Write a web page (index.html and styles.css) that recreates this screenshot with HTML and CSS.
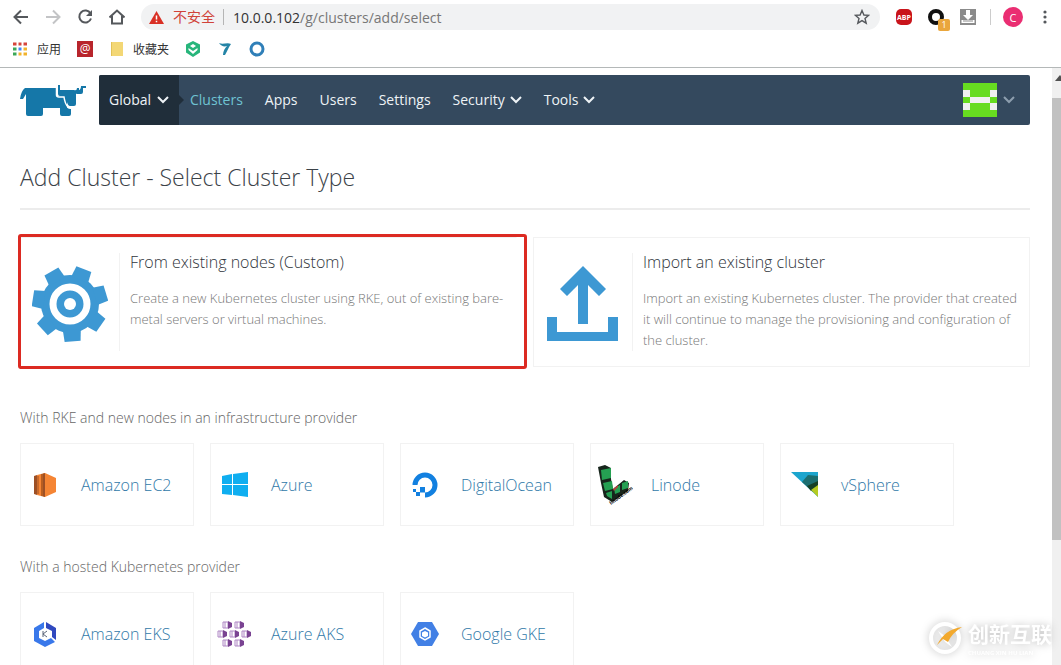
FILE: index.html
```
<!DOCTYPE html>
<html lang="en">

<head>
    <meta charset="UTF-8">
    <meta name="viewport" content="width=device-width, initial-scale=1.0">
    <title>Rancher</title>
    <link rel="stylesheet" href="styles.css">
</head>

<body>
    <div class="browser">
        <div class="toolbar">
            <button class="tool" type="button" aria-label="Back"><svg width="16" height="16" viewBox="0 0 16 16"><path d="M15 8H2M8 1.500L1.500 8L8 14.500" fill="none" stroke="#55585c" stroke-width="2"/></svg></button>
            <button class="tool" type="button" aria-label="Forward"><svg width="16" height="16" viewBox="0 0 16 16"><path d="M1 8H14M8 1.500L14.500 8L8 14.500" fill="none" stroke="#c3c4c6" stroke-width="2"/></svg></button>
            <button class="tool" type="button" aria-label="Reload"><svg width="16" height="16" viewBox="0 0 16 16"><path d="M13.500 4.500A6 6 0 1 0 14 9.500" fill="none" stroke="#55585c" stroke-width="2"/><path d="M15 1V7H9z" fill="#55585c"/></svg></button>
            <button class="tool" type="button" aria-label="Home"><svg width="16" height="16" viewBox="0 0 16 16"><path d="M0.500 8.500L8 1.500L15.500 8.500M3 7V14.500H13V7" fill="none" stroke="#55585c" stroke-width="2"/></svg></button>
            <div class="address">
                <svg width="15" height="13" viewBox="0 0 15 13"><path d="M7.500 0L15 13H0z" fill="#d93025"/><path d="M7.500 4.500V8.500M7.500 9.800V11.200" stroke="#fff" stroke-width="1.500"/></svg>
                <span class="warning">不安全</span>
                <label class="host" for="url">10.0.0.102</label>
                <input class="path" id="url" type="text" value="/g/clusters/add/select">
                <button class="tool" type="button" aria-label="Bookmark"><svg width="16" height="16" viewBox="0 0 16 16"><path d="M8 1.500L9.900 6L14.700 6.300L11 9.400L12.200 14.200L8 11.600L3.800 14.200L5 9.400L1.300 6.300L6.100 6z" fill="none" stroke="#55585c" stroke-width="1.400"/></svg></button>
            </div>
            <div class="extensions">
                <button class="tool abp" type="button">ABP</button>
                <button class="tool counter" type="button" aria-label="Requests"><svg width="16" height="16" viewBox="0 0 16 16"><circle cx="8" cy="8" r="6" fill="none" stroke="#111" stroke-width="4"/></svg><span class="count">1</span></button>
                <button class="tool" type="button" aria-label="Downloads"><svg width="16" height="16" viewBox="0 0 16 16"><rect width="16" height="16" fill="#8b8b8b"/><path d="M6 1H10V6H13L8 11L3 6H6zM1.500 11V14H14.500V11" fill="#fff"/><path d="M3 12H13" stroke="#8b8b8b"/></svg></button>
                <span class="split"></span>
                <button class="tool profile" type="button">C</button>
                <button class="tool" type="button" aria-label="Menu"><svg width="4" height="16" viewBox="0 0 4 16" fill="#55585c"><circle cx="2" cy="3" r="1.600"/><circle cx="2" cy="8" r="1.600"/><circle cx="2" cy="13" r="1.600"/></svg></button>
            </div>
        </div>
        <div class="bookmarks">
            <a href="#"><svg width="14" height="14" viewBox="0 0 14 14"><path d="M0 2H4M5 2H9M10 2H14" stroke="#d6453a" stroke-width="3"/><path d="M0 7H4" stroke="#3aa757" stroke-width="3"/><path d="M5 7H9" stroke="#4286f5" stroke-width="3"/><path d="M10 7H14" stroke="#f2b32a" stroke-width="3"/><path d="M0 12H4" stroke="#3aa757" stroke-width="3"/><path d="M5 12H14" stroke="#f2b32a" stroke-width="3"/><path d="M4.500 0V14M9.500 0V14" stroke="#fff" stroke-width="2"/></svg>应用</a>
            <a class="mail" href="#">@</a>
            <a href="#"><svg width="12" height="14" viewBox="0 0 12 14"><path d="M0 0H12V14H0z" fill="#f3d775"/><path d="M0 0H1V14H0z" fill="#e2c158"/></svg>收藏夹</a>
            <a href="#" aria-label="Shield"><svg width="16" height="16" viewBox="0 0 16 16"><path d="M8 0L15 3.500V11.500L8 16L1 11.500V3.500z" fill="#27b57b"/><path d="M8 3L11 5L8 7L5 5zM3.500 7L8 10L12.500 7V9L8 13L3.500 9z" fill="#fff"/></svg></a>
            <a href="#" aria-label="Seven"><svg width="16" height="14" viewBox="-2 0 16 14"><path d="M0 1C4 3 8 0 12 2C9 6 8 10 6 13H4C4 9 6 6 8 4C5 5 2 4 0 1z" fill="#2484a6"/></svg></a>
            <a href="#" aria-label="Ring"><svg width="16" height="16" viewBox="0 0 16 16"><circle cx="8" cy="8" r="6" fill="none" stroke="#2f7fb8" stroke-width="3"/></svg></a>
        </div>
    </div>

    <div class="viewport">
        <div class="page">
            <header>
                <a class="logo" href="#" aria-label="Rancher">
                    <svg width="67" height="31" viewBox="0 0 67 31" fill="#1577a8">
                        <path d="M5 3H37V11H47V23H23V29Q23 31 21 31H8Q6 31 6 29V9L3 14H0Q1 6 5 3z"/>
                        <path d="M38 0H40V5H54Q57 6 57 3H59V8L56 9V19Q56 21 54 21H50Q48 21 47 17L44 11H40Q38 11 38 9z"/>
                        <path d="M57 5Q61 6 61 1H66V3H63V7Q63 9 61 9H57z"/>
                        <path d="M40 20H46Q46 23 50 24H51V29Q51 31 49 31H42Q40 31 40 29z"/>
                        <path d="M36.500 2V10Q36.500 12 39 12H44Q45 19 48 22H52" fill="none" stroke="#fff" stroke-width="1.500"/>
                    </svg>
                </a>
                <nav>
                    <button class="scope" type="button">Global <svg class="chevron" width="12" height="8" viewBox="0 0 12 8"><path d="M1 1L6 6L11 1"/></svg></button>
                    <a class="active" href="#">Clusters</a>
                    <a href="#">Apps</a>
                    <a href="#">Users</a>
                    <a href="#">Settings</a>
                    <button type="button">Security <svg class="chevron" width="12" height="8" viewBox="0 0 12 8"><path d="M1 1L6 6L11 1"/></svg></button>
                    <button type="button">Tools <svg class="chevron" width="12" height="8" viewBox="0 0 12 8"><path d="M1 1L6 6L11 1"/></svg></button>
                    <button class="user" type="button" aria-label="Account">
                        <svg width="34" height="34" viewBox="0 0 5 5" shape-rendering="crispEdges"><path d="M0 0H5V5H0z" fill="#67dc20"/><path d="M0 1H1V2H0zM4 1H5V2H4zM1 2H4V3H1zM0 3H1V4H0zM4 3H5V4H4z" fill="#f0f0f0"/></svg>
                        <svg class="chevron thin" width="12" height="8" viewBox="0 0 12 8"><path d="M1 1L6 6L11 1"/></svg>
                    </button>
                </nav>
            </header>

            <main>
                <h1>Add Cluster - Select Cluster Type</h1>

                <div class="choices">
                    <a class="choice selected" href="#">
                        <span class="choice-icon">
                            <svg width="76" height="76" viewBox="-38 -38 76 76">
                                <g fill="#3d98d3">
                                    <circle r="29"/>
                                    <path id="tooth" d="M-9 -26L-8 -37.500H8L9 -26z" transform="rotate(176)"/>
                                    <use href="#tooth" transform="rotate(51.430)"/>
                                    <use href="#tooth" transform="rotate(102.860)"/>
                                    <use href="#tooth" transform="rotate(154.290)"/>
                                    <use href="#tooth" transform="rotate(205.710)"/>
                                    <use href="#tooth" transform="rotate(257.140)"/>
                                    <use href="#tooth" transform="rotate(308.570)"/>
                                </g>
                                <circle r="17" fill="none" stroke="#fff" stroke-width="7"/>
                                <circle r="6" fill="#fff"/>
                            </svg>
                        </span>
                        <span class="choice-text">
                            <strong>From existing nodes (Custom)</strong>
                            <span>Create a new Kubernetes cluster using RKE, out of existing bare-metal servers or virtual machines.</span>
                        </span>
                    </a>
                    <a class="choice" href="#">
                        <span class="choice-icon">
                            <svg width="72" height="76" viewBox="0 0 72 76" fill="#3d98d3"><path d="M36 0L59 23L52 30L41 19V58H31V19L20 30L13 23zM0 51H10V66H61V51H71V75H0z"/></svg>
                        </span>
                        <span class="choice-text">
                            <strong>Import an existing cluster</strong>
                            <span>Import an existing Kubernetes cluster. The provider that created it will continue to manage the provisioning and configuration of the cluster.</span>
                        </span>
                    </a>
                </div>

                <h2>With RKE and new nodes in an infrastructure provider</h2>
                <div class="providers">
                    <a class="provider" href="#">
                        <svg width="36" height="40" viewBox="0 0 36 40"><path d="M7 11L10 10V30L7 29z" fill="#9d5025"/><path d="M10 10L14 9V31L10 30z" fill="#f58534"/><path d="M14 9L18 8V32L14 31z" fill="#b85e20"/><path d="M16 8.500L18 8L29 13V27L18 32L16 31z" fill="#f58534"/><path d="M18 8V32L16 31V9z" fill="#9d5025"/><path d="M11 11V29" stroke="#9d5025"/></svg>
                        Amazon EC2
                    </a>
                    <a class="provider" href="#">
                        <svg width="36" height="40" viewBox="0 0 36 40" fill="#0faef0"><path d="M5 11L15 9V19H5zM16 9L31 7V19H16zM5 20H15V30L5 29zM16 20H31V32L16 30z"/></svg>
                        Azure
                    </a>
                    <a class="provider" href="#">
                        <svg width="36" height="40" viewBox="0 0 36 40"><path d="M8 20A10 10 0 1 1 18 30" fill="none" stroke="#1280e0" stroke-width="5"/><path d="M13 22H18V27.500H13zM9 27H13V31H9zM6 24H9V27H6z" fill="#1280e0"/></svg>
                        DigitalOcean
                    </a>
                    <a class="provider" href="#">
                        <svg width="36" height="40" viewBox="0 0 36 40">
                            <path d="M1 2L8 0L14 3V14L16 24L27 15L32 18L31 26L15 37L7 32L4 18z" fill="#17251c"/>
                            <path d="M4 5L14 3V13L5 15zM6 18L15 16L16 24L8 26zM9 28L15 26V34L10 31zM17 23L23 20V27L18 29zM25 18L31 16V23L25 25z" fill="#25a052"/>
                            <path d="M16 24L21 20V22L17 26z" fill="#b1403c"/>
                            <text class="linode-url" transform="translate(14 40) rotate(-36)">linode.com</text>
                        </svg>
                        Linode
                    </a>
                    <a class="provider" href="#">
                        <svg width="36" height="40" viewBox="0 0 36 40"><path d="M4 7H31V32z" fill="#1ca5ce"/><path d="M15 17L21 10L31 11V26L26 27z" fill="#1c6e70"/><path d="M20 21L31 16V24L24 26z" fill="#154026"/><path d="M24 25L31 20V32z" fill="#b5cb22"/></svg>
                        vSphere
                    </a>
                </div>

                <h2>With a hosted Kubernetes provider</h2>
                <div class="providers">
                    <a class="provider" href="#">
                        <svg width="36" height="40" viewBox="0 0 36 40"><path d="M17 8V14L12 17V24L18 27L24 24L28 28L18 33L7 27V14z" fill="#3978ea"/><path d="M19 8L29 14V26L25 23V17L19 14z" fill="#3049bf"/><path d="M16 17V23M20 17L16 20L20 23" fill="none" stroke="#5b6578"/></svg>
                        Amazon EKS
                    </a>
                    <a class="provider" href="#">
                        <svg width="36" height="40" viewBox="0 0 36 40">
                            <g id="pod"><path d="M6 8H11V14H6z" fill="#fff" stroke="#ae86c4"/><path d="M8 8V14" stroke="#ae86c4"/><path d="M11 7L15 9V13L11 15z" fill="#7a4392"/></g>
                            <use href="#pod" x="12"/>
                            <use href="#pod" x="-5" y="9"/>
                            <use href="#pod" x="7" y="9"/>
                            <use href="#pod" x="19" y="9"/>
                            <use href="#pod" y="18"/>
                            <use href="#pod" x="12" y="18"/>
                        </svg>
                        Azure AKS
                    </a>
                    <a class="provider" href="#">
                        <svg width="36" height="40" viewBox="0 0 36 40"><path d="M11 8H25L32 20L25 32H11L4 20z" fill="#4280e5"/><path d="M18 14L23 17V23L18 26L13 23V17z" fill="none" stroke="#fff" stroke-width="1.500"/><path d="M18 17L21 18.500V22L18 23.500L15 22V18.500z" fill="#fff"/></svg>
                        Google GKE
                    </a>
                </div>
            </main>
        </div>
        <div class="scrollbar">
            <svg class="scroll-up" width="10" height="6" viewBox="0 0 10 6"><path d="M5 0L10 6H0z" fill="#505050"/></svg>
            <div class="thumb"></div>
        </div>
    </div>

    <div class="watermark">
        <svg width="36" height="34" viewBox="0 0 36 34"><circle cx="17" cy="17" r="14" fill="none" stroke="#fff" stroke-width="4"/><path d="M10 10L17 15L24 26L17 21z" fill="#fff"/><path d="M9 24Q17 8 34 6Q24 12 20 21L15 18z" fill="#f2a92e"/></svg>
        <div>
            <div class="watermark-name">创新互联</div>
            <div class="watermark-sub">CHUANG XIN HU LIAN</div>
        </div>
    </div>
</body>

</html>
```

FILE: styles.css
```
* {
    box-sizing: border-box;
}

body {
    display: flex;
    flex-direction: column;
    height: 100vh;
    margin: 0;
    overflow: hidden;
    font-family: "Open Sans", "Noto Sans CJK SC", sans-serif;
    font-size: 14px;
    font-weight: 300;
    background-color: white;
}

a {
    color: inherit;
    text-decoration: none;
}

button {
    padding: 0;
    border: none;
    background: none;
    font: inherit;
    color: inherit;
}

svg {
    display: block;
    flex-shrink: 0;
}

/* browser bars */
.browser {
    border-bottom: 1px solid #b4b8b8;
    font-weight: 400;
}

.toolbar {
    display: flex;
    align-items: center;
    gap: 16px;
    height: 34px;
    padding: 0 14px 0 13px;
}

.address {
    display: flex;
    flex: 1;
    align-items: center;
    height: 26px;
    padding: 0 10px 0 8px;
    border-radius: 13px;
    background-color: #f1f2f3;
}

.warning {
    margin: 0 9px;
    padding-right: 8px;
    border-right: 1px solid #b5b5b5;
    line-height: 16px;
    color: #d0433a;
}

.host {
    color: #333;
}

.path {
    flex: 1;
    min-width: 0;
    padding: 0;
    border: none;
    background: none;
    font: inherit;
    color: #777;
}

.extensions {
    display: flex;
    align-items: center;
    gap: 16px;
}

.abp {
    width: 16px;
    height: 16px;
    border-radius: 5px;
    background-color: #c9141b;
    font-size: 7px;
    font-weight: 700;
    color: white;
}

.counter {
    position: relative;
}

.count {
    position: absolute;
    left: 10px;
    top: 10px;
    width: 12px;
    height: 12px;
    border-radius: 2px;
    background-color: #eaa63c;
    font-size: 9px;
    line-height: 12px;
    color: white;
}

.split {
    width: 1px;
    height: 16px;
    margin: 0 -4px 0 -2px;
    background-color: #ccc;
}

.profile {
    width: 20px;
    height: 20px;
    margin-right: 4px;
    border-radius: 50%;
    background-color: #ea2e72;
    font-size: 11px;
    color: white;
}

.bookmarks {
    display: flex;
    align-items: center;
    gap: 16px;
    height: 33px;
    padding: 0 13px 4px;
    font-size: 12px;
    color: #333;
}

.bookmarks a {
    display: flex;
    align-items: center;
    gap: 10px;
}

.bookmarks .mail {
    justify-content: center;
    width: 16px;
    height: 16px;
    margin-right: 2px;
    background-color: #b8252c;
    line-height: 16px;
    color: white;
}

/* page */
.viewport {
    display: flex;
    flex: 1;
    min-height: 0;
}

.page {
    flex: 1;
    padding: 7px 22px 0 20px;
    overflow: hidden;
}

.scrollbar {
    width: 9px;
    background-color: #f0f0f0;
}

.scroll-up {
    margin: 7px 0 0 3px;
}

.thumb {
    height: 74%;
    margin-top: 17px;
    background-color: #c1c1c1;
}

header {
    display: flex;
    height: 50px;
}

.logo {
    width: 79px;
    padding-top: 10px;
}

nav {
    display: flex;
    flex: 1;
    border-radius: 2px;
    background-color: #34495e;
    font-weight: 400;
    color: #eef3f6;
}

nav a,
nav button {
    display: flex;
    align-items: center;
    gap: 5px;
    padding: 0 11px 2px;
}

nav .scope {
    position: relative;
    justify-content: space-between;
    width: 80px;
    padding: 0 10px 2px;
    border-radius: 2px 0 0 2px;
    background-color: #202e3a;
}

.scope::after {
    content: "";
    position: absolute;
    left: 100%;
    top: 20px;
    border: 5px solid transparent;
    border-left-color: #202e3a;
}

nav .active {
    color: #6fc3d2;
}

nav .user {
    gap: 6px;
    margin-left: auto;
    padding: 0 15px 0 0;
}

.chevron {
    margin-top: 2px;
    fill: none;
    stroke: #eef3f6;
    stroke-width: 2;
}

.chevron.thin {
    margin-top: 0;
    stroke: #8d9eae;
}

h1 {
    margin: 38px 0 27px;
    padding-bottom: 17px;
    border-bottom: 2px solid #ececec;
    font-size: 23px;
    font-weight: 300;
    line-height: 28px;
    color: #3b4248;
}

.choices {
    display: grid;
    grid-template-columns: 1fr 1fr;
    gap: 16px;
    margin-bottom: 40px;
}

.choice {
    position: relative;
    display: flex;
    height: 130px;
    padding: 15px 0;
    border: 1px solid #f2f2f2;
}

.selected {
    border-right-color: transparent;
}

.selected::after {
    content: "";
    position: absolute;
    inset: -4px -11px -3px -3px;
    border: 3px solid #dc2a22;
    border-radius: 3px;
}

.choice-icon {
    display: flex;
    align-items: center;
    justify-content: center;
    width: 99px;
    padding-top: 4px;
    border-right: 1px solid #f2f2f2;
}

.choice-text {
    flex: 1;
    padding: 0 8px 0 10px;
    font-size: 13px;
    line-height: 21px;
    color: #777;
}

.choice-text strong {
    display: block;
    margin: -1px 0 15px;
    font-size: 16px;
    font-weight: 300;
    color: #2f353b;
}

h2 {
    margin: 0 0 15px;
    font-size: 14px;
    font-weight: 300;
    line-height: 21px;
    color: #666;
}

.providers {
    display: flex;
    gap: 16px;
    margin-bottom: 30px;
}

.provider {
    display: flex;
    align-items: center;
    gap: 18px;
    width: 174px;
    height: 83px;
    padding-left: 6px;
    border: 1px solid #f2f2f2;
    font-size: 16px;
    color: #2f78a8;
}

.linode-url {
    font-size: 5px;
    font-weight: 700;
}

.watermark {
    position: absolute;
    right: 9px;
    bottom: 8px;
    display: flex;
    align-items: center;
    gap: 4px;
    font-weight: 700;
    color: white;
    filter: drop-shadow(0 0 4px #bbb);
}

.watermark-name {
    font-size: 21px;
    line-height: 30px;
}

.watermark-sub {
    font-size: 6px;
    line-height: 8px;
}
```
